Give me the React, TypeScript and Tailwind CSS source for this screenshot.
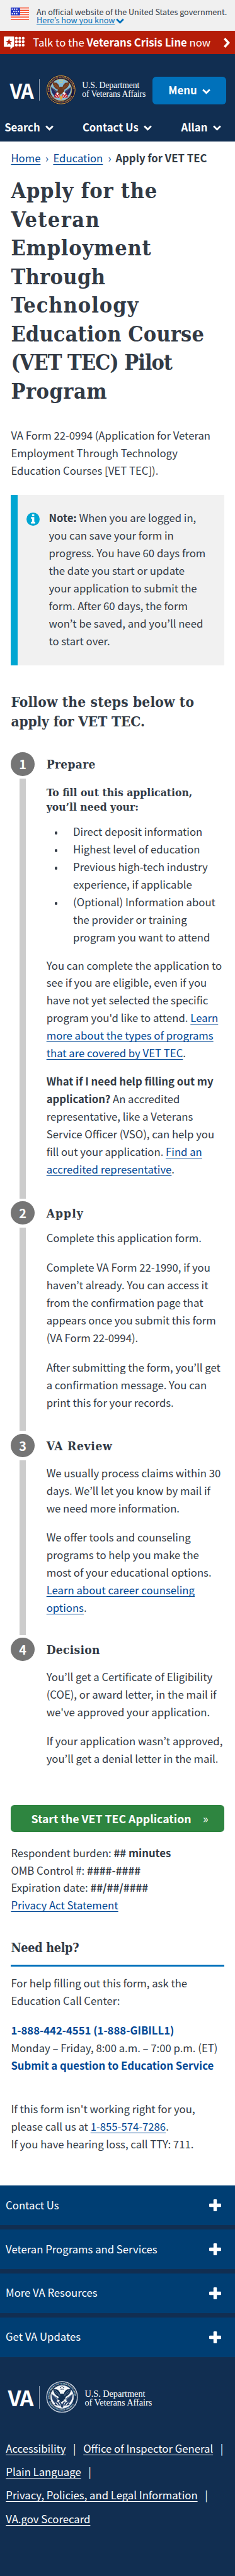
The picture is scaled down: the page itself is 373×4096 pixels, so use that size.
import React from "react";

const sans = "font-['Noto_Sans_CJK_KR',sans-serif]";
const serif = "font-['DejaVu_Serif_Condensed','DejaVu_Serif',serif] font-bold";

function Chevron({ className }: { className: string }) {
  return (
    <svg viewBox="0 0 14 9" className={className} fill="none" stroke="currentColor" strokeWidth="3">
      <path d="M1.2 1.4 L7 7 L12.8 1.4" />
    </svg>
  );
}

function Link({ children }: { children: React.ReactNode }) {
  return (
    <a className="text-[#004795] underline decoration-1 underline-offset-[2.5px] [text-decoration-skip-ink:none]">
      {children}
    </a>
  );
}

function Flag() {
  return (
    <svg viewBox="0 0 29 20" className="h-[20px] w-[29px] shrink-0">
      <rect width="29" height="20" fill="#fff" />
      {[0, 3.6, 7.2, 10.8, 14.4, 18].map((y) => (
        <rect key={y} y={y} width="29" height="1.4" fill="#f5310b" />
      ))}
      <rect width="14.8" height="12.4" fill="#2234c4" />
      {[1.6, 5.1, 8.6].map((x) => (
        <g key={x} fill="#fff">
          <rect x={x} y="1.6" width="2" height="2" />
          <rect x={x + 2.5} y="5.2" width="2" height="2" />
          <rect x={x} y="8.8" width="2" height="2" />
        </g>
      ))}
    </svg>
  );
}

function CrisisIcon() {
  return (
    <svg viewBox="0 0 33 21" className="mt-[1px] h-[21px] w-[33px] shrink-0" fill="#fff">
      <path d="M1.2 0H15.3a1.2 1.2 0 0 1 1.2 1.2V15.3a1.2 1.2 0 0 1-1.2 1.2H14.6L10.6 20.6V16.5H1.2A1.2 1.2 0 0 1 0 15.3V1.2A1.2 1.2 0 0 1 1.2 0Z" />
      <path fill="#b51d09" d="M8.3 3l1.3 4h4.1l-3.3 2.5 1.2 4-3.3-2.4-3.3 2.4 1.2-4L2.9 7H7Z" />
      {[20, 25.4, 30.8].map((x) =>
        [2.8, 8.3, 13.8].map((y) => <circle key={`${x}-${y}`} cx={x} cy={y} r="2.2" />)
      )}
    </svg>
  );
}

function Seal({ mono, className }: { mono?: boolean; className: string }) {
  const ring = mono ? "#dfe5ec" : "#e3b23a";
  const top = mono ? "seal-top-mono" : "seal-top";
  const bottom = mono ? "seal-bottom-mono" : "seal-bottom";
  return (
    <svg viewBox="0 0 100 100" className={className}>
      <defs>
        <path id={top} d="M11 56 A39.5 39.5 0 1 1 89 56" />
        <path id={bottom} d="M7 60 A44.5 44.5 0 0 0 93 60" />
      </defs>
      <circle cx="50" cy="50" r="49.5" fill={mono ? "#dfe5ec" : "#1a1740"} />
      <circle
        cx="50"
        cy="50"
        r="47"
        fill={mono ? "#112e51" : "#17153f"}
        stroke={mono ? "#8a9bb3" : ring}
        strokeWidth="2"
        strokeDasharray={mono ? "1.6 1.2" : undefined}
      />
      <g fontSize="7" fontWeight="700" fill={ring} className="font-['Liberation_Serif',serif]">
        <text><textPath href={`#${top}`} textLength="128">DEPARTMENT OF VETERANS AFFAIRS</textPath></text>
        <text><textPath href={`#${bottom}`} startOffset="5" textLength="98">UNITED STATES OF AMERICA</textPath></text>
      </g>
      <circle cx="50" cy="50" r="36" fill={mono ? "#f4f6f8" : "#82bcd9"} stroke={ring} strokeWidth="1.4" />
      <path
        d="M17 40 L36 54 L42 68 L30 72 Q16 60 17 40Z M83 40 L64 54 L58 68 L70 72 Q84 60 83 40Z"
        fill={mono ? "#26416a" : "#252a60"}
      />
      <path
        d="M17 40 L42 64 M83 40 L58 64"
        stroke={mono ? "#dfe5ec" : "#d8c06a"}
        strokeWidth="1"
      />
      <path
        d="M33 60 Q42 60 48 70 L44 77 Q34 78 26 74 Q30 68 33 60Z M67 60 Q58 60 52 70 L56 77 Q66 78 74 74 Q70 68 67 60Z"
        fill={mono ? "#26416a" : "#bf2b38"}
      />
      <path
        d="M34 63 Q42 66 44 75 M30 68 Q36 70 38 77 M66 63 Q58 66 56 75 M70 68 Q64 70 62 77"
        stroke="#fff"
        strokeWidth="2"
        fill="none"
      />
      <path
        d="M22 24 Q30 27 34 26 Q42 30 45 41 Q50 38 55 41 Q58 30 66 26 Q70 27 78 24 Q79 40 61 50 L60 58 L53 63 L46 67 L41 60 L36 58 L40 50 Q22 42 22 24Z"
        fill={mono ? "#112e51" : "#6b3a1e"}
      />
      <path
        d="M26 28 Q36 33 44 46 M26 35 Q36 38 43 48 M74 28 Q64 33 56 46 M74 35 Q64 38 57 48"
        stroke={mono ? "#8a9bb3" : "#9a6238"}
        strokeWidth="1.2"
        fill="none"
      />
      <path d="M56 58 q7 -1 9 5 l-3 2 l-5 -1 Z M36 58 l6 3 l-3 5 l-4 -2Z" fill="#f4f4f0" />
      <path d="M44 68 L50 72 L56 68 L53 84 L47 82Z" fill={mono ? "#26416a" : "#e0a53c"} />
      {[[45, 20], [50, 17.5], [55, 20], [47, 25.5], [53, 25.5]].map(([x, y]) => (
        <circle key={`${x}-${y}`} cx={x} cy={y} r="1.8" fill={mono ? "#112e51" : "#ecd24c"} />
      ))}
    </svg>
  );
}

function Step({ n, title, height, last, children }: { n: number; title: React.ReactNode; height: string; last?: boolean; children: React.ReactNode }) {
  return (
    <li className={`flex gap-[19px] ${height}`}>
      <div className="flex w-[37.3px] shrink-0 flex-col items-center">
        <div className="flex h-[37.3px] w-[37.3px] shrink-0 items-center justify-center rounded-full bg-[#757575] text-[19.8px] leading-none font-bold text-white">
          {n}
        </div>
        {!last && <div className="my-[4.5px] w-[9.3px] flex-1 bg-[#ccc]" />}
      </div>
      <div>
        <h3 className={`${serif} text-[19px] leading-[38.5px]`}>{title}</h3>
        {children}
      </div>
    </li>
  );
}

const bullets = [
  <>Direct deposit information</>,
  <>Highest level of education</>,
  <>Previous high-tech industry<br />experience, if applicable</>,
  <>(Optional) Information about<br />the provider or training<br />program you want to attend</>,
];

const footerSections = ["Contact Us", "Veteran Programs and Services", "More VA Resources", "Get VA Updates"];

export default function App() {
  return (
    <div className={`${sans} h-[4096px] w-[373px] overflow-hidden bg-white text-[16.73px] leading-[27.97px] whitespace-nowrap text-[#323a45]`}>
      <div className="flex h-[49px] bg-[#f0f0f0] pt-[11.5px] pl-[17px]">
        <Flag />
        <div className="ml-[12px] text-[12.6px] leading-[13.8px]">
          <p>An official website of the United States government.</p>
          <p className="flex items-center text-[#0071bb]">
            <span className="underline decoration-1 underline-offset-2 [text-decoration-skip-ink:none]">Here’s how you know</span>
            <Chevron className="mt-[3px] ml-[2px] h-[9px] w-[13px]" />
          </p>
        </div>
      </div>

      <div className="flex h-[37.3px] items-center bg-[#b51d09] pl-[5.7px] text-white">
        <CrisisIcon />
        <p className="ml-[13.6px] w-[302.7px]">
          Talk to the <b>Veterans Crisis Line</b> now
        </p>
        <svg viewBox="0 0 10 16" className="h-[16px] w-[10px]" fill="none" stroke="#fff" strokeWidth="3.6">
          <path d="M1.4 1.2 L7.6 8 L1.4 14.8" />
        </svg>
      </div>

      <header className="h-[138.8px] bg-[#112e51] text-white">
        <div className="flex h-[96px] items-start">
          <span className="mt-[38.8px] ml-[15.5px] w-[37.8px] text-[32px] leading-[36px] font-bold tracking-[-1.5px]">VA</span>
          <div className="mt-[39.7px] ml-[9.2px] h-[34.2px] w-px bg-[#93a1b3]" />
          <Seal className="mt-[32.6px] ml-[9.8px] h-[47.6px] w-[47.6px]" />
          <p className="mt-[43px] ml-[9.4px] w-[112px] font-['Liberation_Serif',serif] text-[13.7px] leading-[13.8px] tracking-[-0.1px]">
            U.S. Department<br />of Veterans Affairs
          </p>
          <div className="mt-[36.2px] flex h-[43.1px] w-[116.6px] items-center rounded-[5.8px] bg-[#0071bb] pl-[25px] font-bold">
            <span className="w-[53.7px]">Menu</span>
            <Chevron className="mt-[3px] h-[9px] w-[13px]" />
          </div>
        </div>
        <nav className="flex h-[42px] pt-[6.3px] font-bold">
          <div className="flex w-[123.7px] items-start pl-[7.2px]">
            <span className="w-[64.8px]">Search</span>
            <Chevron className="mt-[10.9px] h-[9px] w-[13px]" />
          </div>
          <div className="flex w-[156px] items-start pl-[7.2px]">
            <span className="w-[96.8px]">Contact Us</span>
            <Chevron className="mt-[10.9px] h-[9px] w-[13px]" />
          </div>
          <div className="flex items-start pl-[7.9px]">
            <span className="w-[50.4px]">Allan</span>
            <Chevron className="mt-[10.9px] h-[9px] w-[13px]" />
          </div>
        </nav>
      </header>

      <main className="px-[17.4px]">
        <nav className="mt-[12.7px] flex">
          <span className="w-[54.5px]"><Link>Home</Link></span>
          <span className="w-[12.5px] text-[#004795]">›</span>
          <span className="w-[87px]"><Link>Education</Link></span>
          <span className="w-[12px] text-[#004795]">›</span>
          <b>Apply for VET TEC</b>
        </nav>

        <h1 className={`${serif} mt-[15.7px] text-[34px] leading-[45.47px]`}>
          <span className="tracking-[0.75px]">Apply for the</span><br />
          <span className="tracking-[1.4px]">Veteran</span><br />
          <span className="tracking-[0.8px]">Employment</span><br />
          <span className="tracking-[0.35px]">Through</span><br />
          <span className="tracking-[1px]">Technology</span><br />
          <span className="tracking-[0.15px]">Education Course</span><br />
          <span className="tracking-[-1.05px]">(VET TEC) Pilot</span><br />
          <span className="tracking-[0.5px]">Program</span>
        </h1>

        <p className="mt-[34.3px]">
          VA Form 22-0994 (Application for Veteran<br />Employment Through Technology<br />Education Courses [VET TEC]).
        </p>

        <div className="mt-[23.6px] flex h-[270.7px] border-l-[11.6px] border-[#00a6d2] bg-[#f1f1f1] pt-[23.1px] pl-[14px]">
          <svg viewBox="0 0 21 21" className="mt-[5.1px] h-[21px] w-[21px] shrink-0">
            <circle cx="10.5" cy="10.5" r="10.5" fill="#00a6d2" />
            <path fill="#fff" d="M8.8 2.8h3.6v2.8H8.8ZM7.2 7.2h5.2v7.6h1.6v2.6H7.2v-2.6h1.7v-5H7.2Z" />
          </svg>
          <p className="ml-[14px]">
            <b>Note:</b> When you are logged in,<br />you can save your form in<br />progress. You have 60 days from<br />the date you start or update<br />your application to submit the<br />form. After 60 days, the form<br />won’t be saved, and you’ll need<br />to start over.
          </p>
        </div>

        <h2 className={`${serif} mt-[43.6px] text-[22.5px] leading-[30.3px]`}>
          <span className="tracking-[0.2px]">Follow the steps below to</span><br />
          <span className="tracking-[-0.1px]">apply for VET TEC.</span>
        </h2>

        <ol className="mt-[34.5px]">
          <Step n={1} title={<span className="tracking-[0.35px]">Prepare</span>} height="h-[713.7px]">
            <h4 className={`${serif} mt-[13.9px] text-[17.4px] leading-[23.3px]`}>
              To fill out this application,<br />you’ll need your:
            </h4>
            <ul className="mt-[14.1px] ml-[13px]">
              {bullets.map((item, i) => (
                <li key={i} className="flex">
                  <span className="mt-[12.6px] mr-[24.8px] h-[4.6px] w-[4.6px] rounded-full bg-[#323a45]" />
                  <span>{item}</span>
                </li>
              ))}
            </ul>
            <p className="mt-[16.3px]">
              You can complete the application to<br />see if you are eligible, even if you<br />have not yet selected the specific<br />program you'd like to attend. <Link>Learn<br />more about the types of programs<br />that are covered by VET TEC</Link>.
            </p>
            <p className="mt-[16.7px]">
              <b>What if I need help filling out my<br />application?</b> An accredited<br />representative, like a Veterans<br />Service Officer (VSO), can help you<br />fill out your application. <Link>Find an<br />accredited representative</Link>.
            </p>
          </Step>
          <Step n={2} title={<span className="tracking-[1.1px]">Apply</span>} height="h-[369.8px]">
            <p className="mt-[6.8px]">Complete this application form.</p>
            <p className="mt-[19px]">
              Complete VA Form 22-1990, if you<br />haven’t already. You can access it<br />from the confirmation page that<br />appears once you submit this form<br />(VA Form 22-0994).
            </p>
            <p className="mt-[18.6px]">
              After submitting the form, you’ll get<br />a confirmation message. You can<br />print this for your records.
            </p>
          </Step>
          <Step n={3} title={<span className="tracking-[0.75px]">VA Review</span>} height="h-[324.3px]">
            <p className="mt-[10.3px]">
              We usually process claims within 30<br />days. We’ll let you know by mail if<br />we need more information.
            </p>
            <p className="mt-[18.6px]">
              We offer tools and counseling<br />programs to help you make the<br />most of your educational options.<br /><Link>Learn about career counseling<br />options</Link>.
            </p>
          </Step>
          <Step n={4} title={<span className="tracking-[0.3px]">Decision</span>} height="h-[266px]" last>
            <p className="mt-[10.1px]">
              You’ll get a Certificate of Eligibility<br />(COE), or award letter, in the mail if<br />we've approved your application.
            </p>
            <p className="mt-[18.6px]">
              If your application wasn’t approved,<br />you’ll get a denial letter in the mail.
            </p>
          </Step>
        </ol>

        <div className="flex h-[43px] items-center rounded-[5.8px] bg-[#2e8540] pt-px pl-[32px] font-bold text-white">
          <span className="w-[272.6px] text-[17.7px]">Start the VET TEC Application</span>
          <span className="text-[18px] font-normal">»</span>
        </div>

        <p className="mt-[19.4px]">
          Respondent burden: <b>## minutes</b><br />OMB Control #: <b>####-####</b><br />Expiration date: <b>##/##/####</b><br /><Link>Privacy Act Statement</Link>
        </p>

        <h2 className={`${serif} mt-[40.8px] border-b-[3px] border-[#0071bb] pb-[12.3px] text-[19.6px] leading-[26px] tracking-[-0.25px]`}>Need help?</h2>
        <p className="mt-[13.6px]">
          For help filling out this form, ask the<br />Education Call Center:
        </p>
        <p className="mt-[19px]">
          <b className="text-[#004795]">1-888-442-4551 (1-888-GIBILL1)</b><br />Monday – Friday, 8:00 a.m. – 7:00 p.m. (ET)<br /><b className="text-[#004795]">Submit a question to Education Service</b>
        </p>
        <p className="mt-[40.7px]">
          If this form isn't working right for you,<br />please call us at <Link>1-855-574-7286</Link>.<br />If you have hearing loss, call TTY: 711.
        </p>
      </main>

      <footer className="mt-[51.6px] h-[622px] bg-[#112e51] text-white">
        <div className="flex flex-col gap-[7px]">
          {footerSections.map((t) => (
            <div key={t} className="flex h-[62.95px] items-center justify-between bg-[#003e73] pr-[22px] pl-[9.1px]">
              <span>{t}</span>
              <svg viewBox="0 0 19 19" className="h-[19px] w-[19px]" fill="#fff">
                <rect y="6.8" width="19" height="5.4" rx="1.2" />
                <rect x="6.8" width="5.4" height="19" rx="1.2" />
              </svg>
            </div>
          ))}
        </div>
        <div className="flex h-[126.8px] items-start">
          <span className="mt-[45.6px] ml-[12.6px] w-[40.2px] text-[34.2px] leading-[36px] font-bold tracking-[-1.6px]">VA</span>
          <div className="mt-[46px] ml-[9.6px] h-[36px] w-px bg-[#93a1b3]" />
          <Seal mono className="mt-[38.5px] ml-[10px] h-[50.6px] w-[51px]" />
          <p className="mt-[51px] ml-[10px] font-['Liberation_Serif',serif] text-[14.4px] leading-[14px] tracking-[-0.07px]">
            U.S. Department<br />of Veterans Affairs
          </p>
        </div>
        <div className="pl-[9.3px] leading-[37.3px] [&_a]:underline [&_a]:decoration-1 [&_a]:underline-offset-[2.5px] [&_a]:[text-decoration-skip-ink:none]">
          <p><a>Accessibility</a><span className="px-[11.6px]">|</span><a>Office of Inspector General</a><span className="px-[11.6px]">|</span></p>
          <p><a>Plain Language</a><span className="px-[11.6px]">|</span></p>
          <p><a>Privacy, Policies, and Legal Information</a><span className="px-[11.6px]">|</span></p>
          <p><a>VA.gov Scorecard</a></p>
        </div>
      </footer>
    </div>
  );
}
